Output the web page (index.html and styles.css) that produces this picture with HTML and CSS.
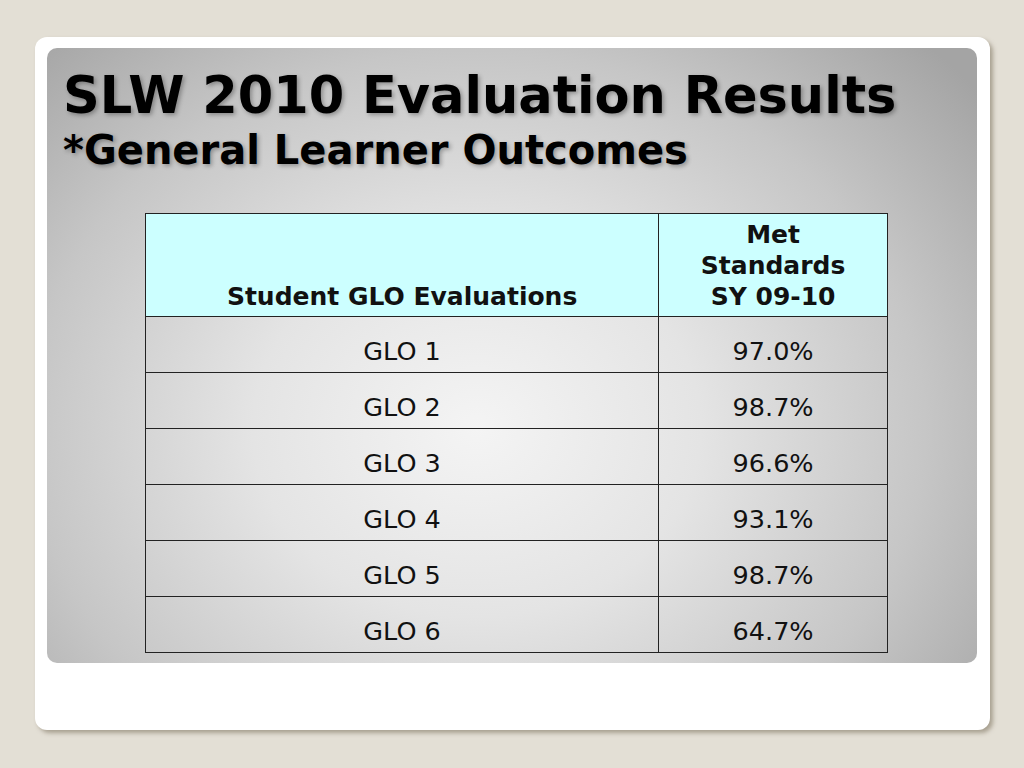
FILE: index.html
```html
<!DOCTYPE html>
<html>
<head>
<meta charset="utf-8">
<link rel="stylesheet" href="styles.css">
</head>
<body>
<div class="card">
  <div class="panel">
    <h1 class="title">SLW 2010 Evaluation Results</h1>
    <h2 class="subtitle">*General Learner Outcomes</h2>
    <table class="results">
      <thead>
        <tr>
          <th class="col-a">Student GLO Evaluations</th>
          <th class="col-b">Met<br>Standards<br>SY 09-10</th>
        </tr>
      </thead>
      <tbody>
        <tr><td>GLO 1</td><td>97.0%</td></tr>
        <tr><td>GLO 2</td><td>98.7%</td></tr>
        <tr><td>GLO 3</td><td>96.6%</td></tr>
        <tr><td>GLO 4</td><td>93.1%</td></tr>
        <tr><td>GLO 5</td><td>98.7%</td></tr>
        <tr><td>GLO 6</td><td>64.7%</td></tr>
      </tbody>
    </table>
  </div>
</div>
</body>
</html>
```

FILE: styles.css
```css
html, body {
  margin: 0;
  padding: 0;
}
body {
  background: #e3dfd5;
  width: 1024px;
  height: 768px;
  overflow: hidden;
  padding: 37px 0 0 35px;
  box-sizing: border-box;
  font-family: "DejaVu Sans", Verdana, sans-serif;
}
.card {
  width: 955px;
  height: 693px;
  background: #ffffff;
  border-radius: 12px;
  box-shadow: 3px 3px 4px rgba(120, 110, 90, 0.55);
  padding: 11px 13px 0 12px;
  box-sizing: border-box;
}
.panel {
  height: 615px;
  border-radius: 10px;
  background: radial-gradient(ellipse 640px 540px at 430px 380px, #f4f4f4 0%, #e4e4e4 35%, #c6c6c6 70%, #a4a4a4 100%);
  padding: 20px 0 0 16px;
  box-sizing: border-box;
  display: flex;
  flex-direction: column;
}
.title {
  margin: 0;
  font-size: 51px;
  line-height: 56px;
  font-weight: bold;
  color: #000;
  text-shadow: 2px 2px 4px rgba(0, 0, 0, 0.3);
}
.subtitle {
  margin: 0;
  font-size: 40px;
  line-height: 52px;
  font-weight: bold;
  color: #000;
  text-shadow: 2px 2px 4px rgba(0, 0, 0, 0.3);
}
.results {
  margin: 37px 0 0 82px;
  border-collapse: collapse;
  width: 743px;
  color: #111;
}
.results th, .results td {
  border: 1px solid #222;
  text-align: center;
  padding: 0;
}
.results th {
  background: #ccffff;
  font-weight: bold;
  font-size: 25px;
  line-height: 31px;
  height: 98px;
  vertical-align: bottom;
  padding-bottom: 4px;
}
.col-a { width: 513px; }
.col-b { width: 228px; }
.results td {
  height: 43px;
  padding-top: 12px;
  font-size: 25.5px;
  vertical-align: middle;
}
```
